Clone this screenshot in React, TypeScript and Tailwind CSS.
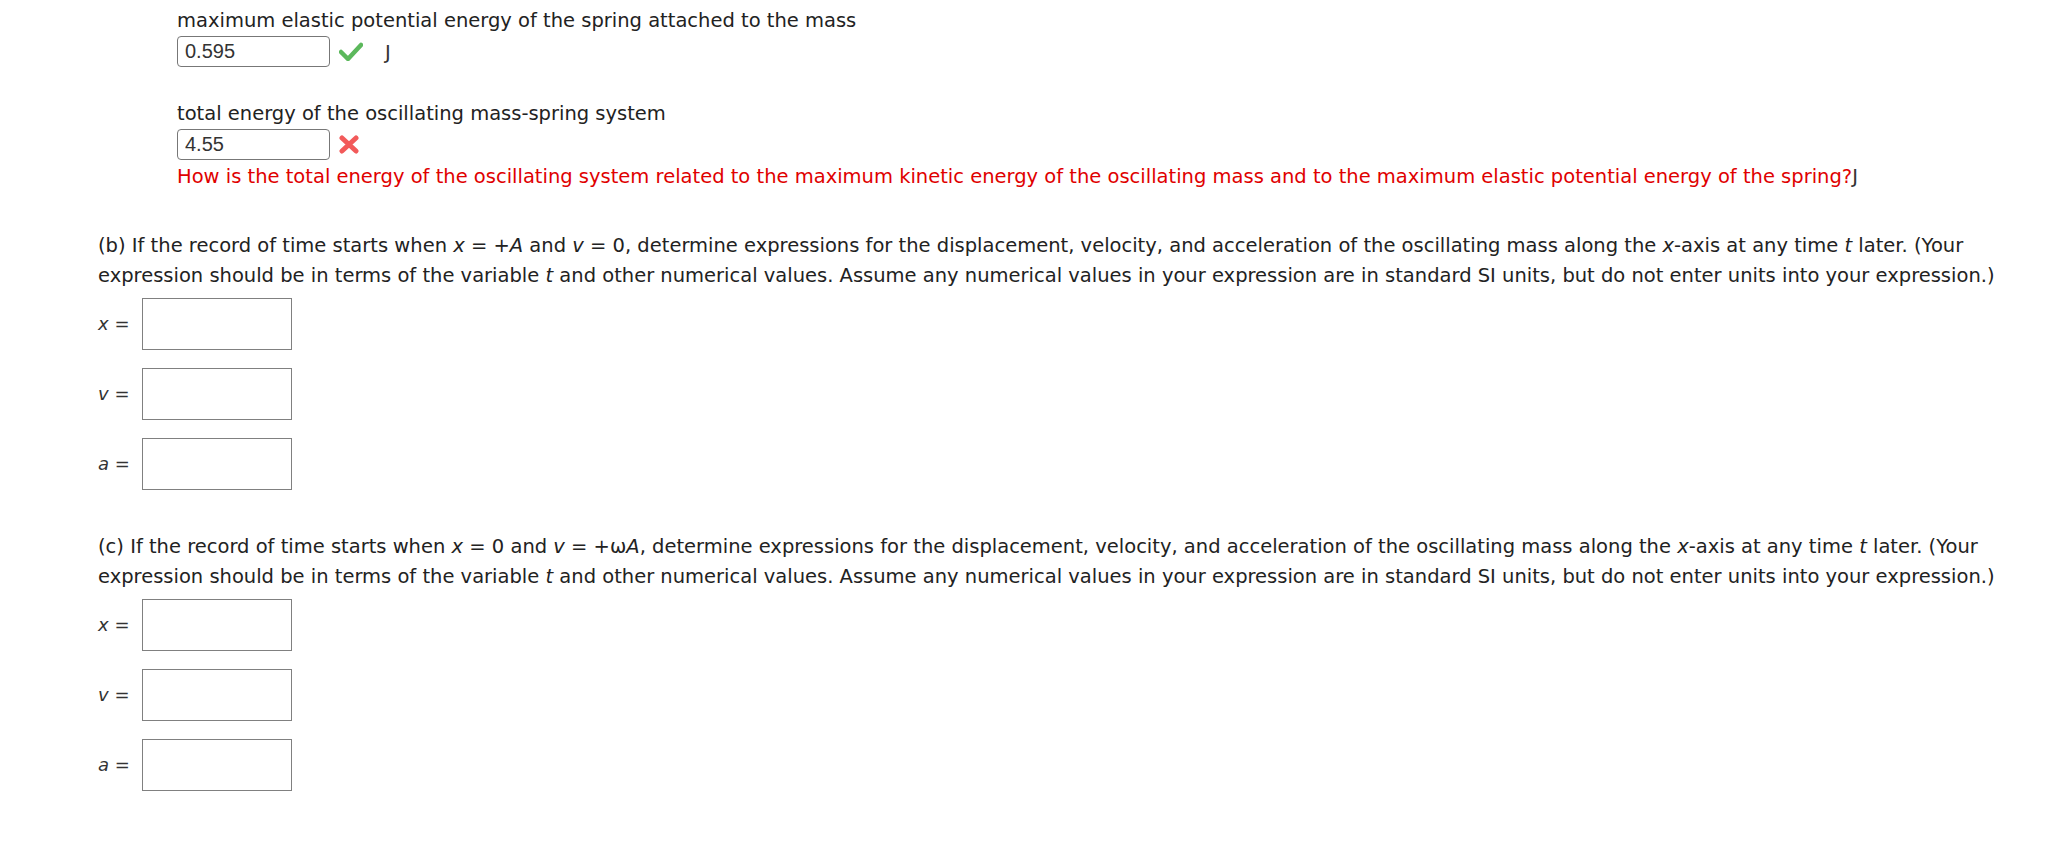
import React from 'react';

const body = { fontFamily: '"DejaVu Sans", Verdana, sans-serif' };

function Check() {
  return (
    <svg width="24" height="19" viewBox="0 0 24 19" className="ml-[9px] mt-[6px]">
      <path d="M2 10 L9 17 L22 3" fill="none" stroke="#5cb85c" strokeWidth="4.5" strokeLinecap="round" strokeLinejoin="round" />
    </svg>
  );
}

function Cross() {
  return (
    <svg width="22" height="19" viewBox="0 0 22 19" className="ml-[8px] mt-[6px]">
      <path d="M4 3 L18 16 M18 3 L4 16" fill="none" stroke="#f25a5a" strokeWidth="5" strokeLinecap="round" />
    </svg>
  );
}

function Answer({ value, ok }: { value: string; ok: boolean }) {
  return (
    <div className="flex items-start h-[31px]">
      <input
        readOnly
        value={value}
        className="w-[153px] h-[31px] border border-[#777] rounded-[4px] px-[7px] text-[20px] text-[#333] outline-none"
        style={{ fontFamily: '"Liberation Sans", Arial, sans-serif' }}
      />
      {ok ? <Check /> : <Cross />}
      {ok && <span className="ml-[22px] mt-[2px] text-[#333]">J</span>}
    </div>
  );
}

function Field({ name }: { name: string }) {
  return (
    <div className="flex items-center h-[52px]">
      <span className="w-[44px] text-[18px] text-[#333] whitespace-nowrap">
        <i>{name}</i> =
      </span>
      <div className="w-[150px] h-[52px] border border-[#808080] bg-white" />
    </div>
  );
}

function Part({ label, cond }: { label: string; cond: React.ReactNode }) {
  return (
    <div>
      <p className="text-[#222]">
        ({label}) If the record of time starts when {cond}, determine expressions for the displacement, velocity, and acceleration of the oscillating mass along the <i>x</i>-axis at any time <i>t</i> later. (Your expression should be in terms of the variable <i>t</i> and other numerical values. Assume any numerical values in your expression are in standard SI units, but do not enter units into your expression.)
      </p>
      <div className="flex flex-col gap-[18px] mt-[7px]">
        <Field name="x" />
        <Field name="v" />
        <Field name="a" />
      </div>
    </div>
  );
}

export default function App() {
  return (
    <div className="w-[2058px] h-[868px] bg-white text-[19.5px] leading-[30px] text-[#222] pl-[98px] pr-[60px] pt-[6px]" style={body}>
      <div className="pl-[79px]">
        <p>maximum elastic potential energy of the spring attached to the mass</p>
        <Answer value="0.595" ok />
        <p className="mt-[32px]">total energy of the oscillating mass-spring system</p>
        <Answer value="4.55" ok={false} />
        <p className="mt-[2px] text-[#e00000]">
          How is the total energy of the oscillating system related to the maximum kinetic energy of the oscillating mass and to the maximum elastic potential energy of the spring?<span className="text-[#333]">J</span>
        </p>
      </div>
      <div className="mt-[39px]">
        <Part label="b" cond={<><i>x</i> = +<i>A</i> and <i>v</i> = 0</>} />
      </div>
      <div className="mt-[42px]">
        <Part label="c" cond={<><i>x</i> = 0 and <i>v</i> = +ω<i>A</i></>} />
      </div>
    </div>
  );
}
